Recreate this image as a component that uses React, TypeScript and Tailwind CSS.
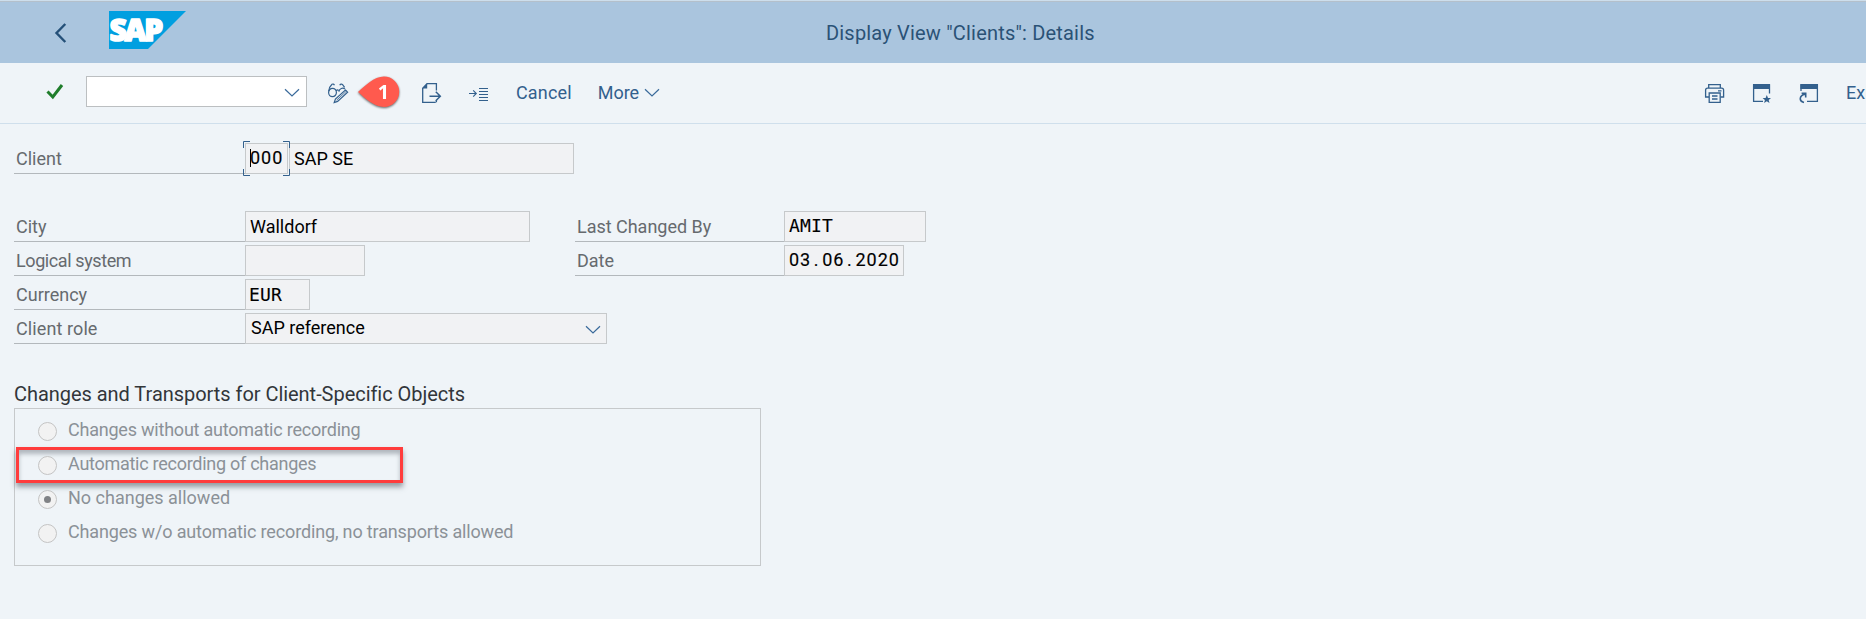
import React from 'react';

type LabelProps = { children: React.ReactNode; width: string; spacing?: string };

function Label({ children, width, spacing = '' }: LabelProps) {
  return (
    <div className={`h-[31px] shrink-0 border-b border-[#b3b8bc] pl-[2px] text-[18px] leading-[32px] text-[#666a6e] whitespace-nowrap ${width}`}>
      <span className={spacing}>{children}</span>
    </div>
  );
}

type FieldProps = { children?: React.ReactNode; className?: string };

function Field({ children, className = '' }: FieldProps) {
  return (
    <div className={`flex h-[31px] shrink-0 items-center border border-[#c6c9cb] bg-[#f1f2f4] text-[18px] leading-[29px] text-black whitespace-nowrap ${className}`}>
      {children}
    </div>
  );
}

function Chevron({ className = '' }: { className?: string }) {
  return (
    <svg className={`shrink-0 ${className}`} width="16" height="10" viewBox="0 0 16 10" fill="none" stroke="#3a6a9b" strokeWidth="1.2">
      <path d="M1 1.2 L8 8 L15 1.2" />
    </svg>
  );
}

function Dot() {
  return <span className="inline-block w-[11px] text-center">.</span>;
}

function SapLogo() {
  return (
    <svg className="ml-[42px] shrink-0" width="77" height="38" viewBox="0 0 77 38">
      <path d="M0 0H77L39 38H0Z" fill="#009fe0" />
      <text x="0.5" y="29.5" fill="#fff" stroke="#fff" strokeWidth="1.6" strokeLinejoin="round" fontFamily="'Open Sans','Noto Sans',sans-serif" fontWeight="800" fontSize="30" letterSpacing="-2.2">SAP</text>
    </svg>
  );
}

function Header() {
  return (
    <header className="flex h-[63px] items-center border-t border-[#cddeec] bg-[#aac5de] shadow-[inset_0_1px_0_#b4c0cb]">
      <div className="flex w-[826px] shrink-0 items-center pb-[4px]">
        <svg className="ml-[54px] mt-[5px] shrink-0" width="13" height="20" viewBox="0 0 13 20" fill="none" stroke="#245078" strokeWidth="2.4">
          <path d="M11.3 1 L2.5 10 L11.3 19" />
        </svg>
        <SapLogo />
      </div>
      <h1 className="pt-px text-[20px] leading-[24px] tracking-[0.19px] text-[#2a5276] whitespace-nowrap">Display View "Clients": Details</h1>
    </header>
  );
}

function Toolbar() {
  return (
    <div className="flex h-[61px] items-center overflow-hidden border-b border-[#cfdfec] pb-[3px] text-[18px] text-[#33608d]">
      <svg className="ml-[46px] shrink-0" width="19" height="17" viewBox="0 0 19 17" fill="none" stroke="#1f7d2b" strokeWidth="3">
        <path d="M1.5 8.5 L6.8 14 L16 2" />
      </svg>
      <div className="ml-[21px] flex h-[31px] w-[221px] shrink-0 items-center justify-end border border-[#bcbfc1] bg-white pr-[6px]">
        <Chevron className="mt-[3px]" />
      </div>
      <svg className="mt-[2px] ml-[20px] shrink-0" width="22" height="22" viewBox="0 0 22 22" fill="none" stroke="#33608d" strokeWidth="1.2">
        <ellipse cx="5.5" cy="10.5" rx="3.9" ry="4.2" />
        <path d="M1.7 9.2 C2 6 3.8 3.4 5 2.3 C5.8 1.7 7 2 7.4 3.2" />
        <path d="M9.2 8.8 C10 7.6 11 7.6 11.6 8.8" />
        <path d="M12.8 3.2 C13.2 2 14.7 1.6 15.6 2.6 L17.6 5.4" />
        <path d="M11.9 9.8 C12.1 6.4 16 5.2 18 7.2" />
        <path d="M18.4 8 L20.6 10.2 L10.6 19.4 L7.2 20.6 L8.4 17 Z" />
        <path d="M9.6 18.2 L19.4 9.2" strokeWidth="0.8" />
      </svg>
      <svg className="ml-[8px] shrink-0 overflow-visible drop-shadow-[0_1px_1px_rgba(0,0,0,0.6)]" width="44" height="32" viewBox="0 0 44 32">
        <path d="M1 16 C8 10 17 .6 27 .6 A15 15 0 0 1 27 31 C17 31 8 22 1 16Z" fill="#ff5a4e" />
        <text x="26.5" y="22.8" fill="#fff" textAnchor="middle" fontFamily="'Noto Sans',sans-serif" fontWeight="700" fontSize="20">1</text>
      </svg>
      <svg className="mt-[2px] ml-[20px] shrink-0" width="21" height="22" viewBox="0 0 21 22" fill="none" stroke="#33608d" strokeWidth="1.3">
        <path d="M15.4 8.5 V1.7 H6 L1.7 6.2 V20.3 H14.7 M15.4 20.3 V18" />
        <path d="M6.2 1.5 V6.6 H1.2Z" fill="#33608d" stroke="none" />
        <path d="M8.5 14.2 H19 M14.8 9.7 L19.3 14.2 L14.8 18.7" strokeWidth="1.5" />
      </svg>
      <svg className="mt-[4px] ml-[27px] shrink-0" width="20" height="14" viewBox="0 0 20 14" fill="none" stroke="#33608d">
        <path d="M0 6.5 H7 M4.2 3.4 L7.3 6.5 L4.2 9.6" strokeWidth="1.1" />
        <path d="M10 1.5 H19 M10 4.5 H19 M10 7.5 H19 M10 10.5 H19 M10 13.5 H19" strokeWidth="1" />
      </svg>
      <span className="mt-[2px] ml-[27px] tracking-[0.15px]">Cancel</span>
      <span className="mt-[2px] ml-[26px]">More</span>
      <Chevron className="mt-[2px] ml-[5px]" />
      <div className="ml-auto flex w-[162px] shrink-0 items-center whitespace-nowrap">
        <svg className="mt-[3px] shrink-0" width="22" height="21" viewBox="0 0 22 21" fill="none" stroke="#33608d" strokeWidth="1.3">
          <path d="M4.7 5 V1.6 H16.3 V5" />
          <path d="M5 14 H1.6 V7.2 Q1.6 5.2 3.6 5.2 H17.6 Q19.6 5.2 19.6 7.2 V14 H16.5" />
          <path d="M5.2 10 H16.2 V19.4 H5.2Z M8 13 H13.5 M8 16 H13.5 M14 7.8 H17.5" />
        </svg>
        <svg className="mt-[3px] ml-[26px] shrink-0" width="20" height="21" viewBox="0 0 20 21" fill="none" stroke="#33608d" strokeWidth="1.3">
          <path d="M11 18.3 H1.6 V2 H17.5 V10.5" />
          <path d="M1 1 H18 V6 H1Z" fill="#33608d" stroke="none" />
          <path d="M14.8 12 L16 15 L19 15.1 L16.7 17 L17.5 20 L14.8 18.3 L12.1 20 L12.9 17 L10.6 15.1 L13.6 15Z" fill="#33608d" stroke="none" />
        </svg>
        <svg className="mt-[3px] ml-[27px] shrink-0" width="20" height="21" viewBox="0 0 20 21" fill="none" stroke="#33608d" strokeWidth="1.3">
          <path d="M2 8 V2 H18.4 V18.3 H8" />
          <path d="M1.4 1 H19 V6 H1.4Z" fill="#33608d" stroke="none" />
          <path d="M5 19.5 C-.4 18 .2 12.5 6 11.2 M2.6 10.4 H6.7 V14.5" strokeWidth="1.6" />
        </svg>
        <span className="mt-[2px] ml-[27px]">Exit</span>
      </div>
    </div>
  );
}

function FocusFrame() {
  return (
    <svg className="pointer-events-none absolute -top-[2px] -left-[2px]" width="48" height="36" viewBox="0 0 48 36" fill="none" stroke="#33608d">
      <path d="M.5 7 V.5 H7 M40 .5 H46.5 V7 M46.5 28 V34.5 H40 M7 34.5 H.5 V28" />
    </svg>
  );
}

const options = [
  { label: 'Changes without automatic recording', spacing: 'tracking-[-0.22px]' },
  { label: 'Automatic recording of changes', spacing: 'tracking-[-0.27px]', highlighted: true },
  { label: 'No changes allowed', spacing: '', selected: true },
  { label: 'Changes w/o automatic recording, no transports allowed', spacing: 'tracking-[-0.15px]' },
];

export default function App() {
  return (
    <div className="flex h-[619px] w-[1866px] flex-col overflow-hidden bg-[#eff4f8] font-['Roboto',sans-serif]">
      <Header />
      <Toolbar />
      <main className="flex flex-col pt-[19px] pl-[14px]">
        <div className="flex">
          <Label width="w-[231px]">Client</Label>
          <div className="relative flex">
            <Field className="w-[43px] pl-[4px]">
              <span className="mt-[-2px] mr-[-1px] h-[18px] w-px shrink-0 bg-black" />
              <span className="pb-[3px] tracking-[1px] [-webkit-text-stroke:0.15px_#000]">000</span>
            </Field>
            <FocusFrame />
          </div>
          <Field className="ml-px w-[285px] pl-[4px]">SAP SE</Field>
        </div>

        <div className="mt-[37px] flex">
          <div className="flex w-[561px] flex-col gap-[3px]">
            <div className="flex">
              <Label width="w-[231px]">City</Label>
              <Field className="w-[285px] pl-[4px]">Walldorf</Field>
            </div>
            <div className="flex">
              <Label width="w-[231px]" spacing="tracking-[-0.4px]">Logical system</Label>
              <Field className="w-[120px]" />
            </div>
            <div className="flex">
              <Label width="w-[231px]">Currency</Label>
              <Field className="w-[65px] pl-[3px] font-['DejaVu_Sans_Mono',monospace]"><span className="tracking-[0.2px] [-webkit-text-stroke:0.1px_#000]">EUR</span></Field>
            </div>
            <div className="flex">
              <Label width="w-[231px]" spacing="tracking-[0.1px]">Client role</Label>
              <Field className="w-[362px] justify-between pr-[5px] pl-[5px]">
                <span className="pb-[2px]">SAP reference</span>
                <Chevron className="mt-[3px]" />
              </Field>
            </div>
          </div>
          <div className="flex flex-col gap-[3px]">
            <div className="flex">
              <Label width="w-[209px]" spacing="tracking-[-0.02px]">Last Changed By</Label>
              <Field className="w-[142px] pl-[4px] font-['DejaVu_Sans_Mono',monospace]"><span className="pb-[2px] tracking-[0.2px] [-webkit-text-stroke:0.1px_#000]">AMIT</span></Field>
            </div>
            <div className="flex">
              <Label width="w-[209px]">Date</Label>
              <Field className="w-[120px] pl-[4px] tracking-[1px]">
                <span className="pb-[3px] [-webkit-text-stroke:0.15px_#000]">03<Dot />06<Dot />2020</span>
              </Field>
            </div>
          </div>
        </div>

        <h2 className="mt-[37px] h-[27px] text-[20px] leading-[26px] tracking-[-0.04px] text-[#32363a] whitespace-nowrap">
          Changes and Transports for Client-Specific Objects
        </h2>
        <div className="flex h-[158px] w-[747px] flex-col border border-[#c6c9cb] pt-[4px]">
          {options.map((o) => (
            <div key={o.label} className="relative flex h-[34px] items-center pl-[23px] text-[18px] text-[#8b9197] whitespace-nowrap">
              {o.highlighted && (
                <div className="absolute top-0 left-px h-[36px] w-[387px] border-[3px] border-[#ff3c3c] shadow-[0_4px_5px_rgba(60,70,80,0.5),inset_0_4px_4px_rgba(60,70,80,0.35)]" />
              )}
              <div className="relative mt-[2px] flex size-[19px] items-center justify-center rounded-full border border-[#c4c4c4] bg-[#f2f2f2]">
                {o.selected && <div className="size-[7px] rounded-full bg-[#808285]" />}
              </div>
              <span className={`relative ml-[11px] pb-[2px] ${o.spacing}`}>{o.label}</span>
            </div>
          ))}
        </div>
      </main>
    </div>
  );
}
